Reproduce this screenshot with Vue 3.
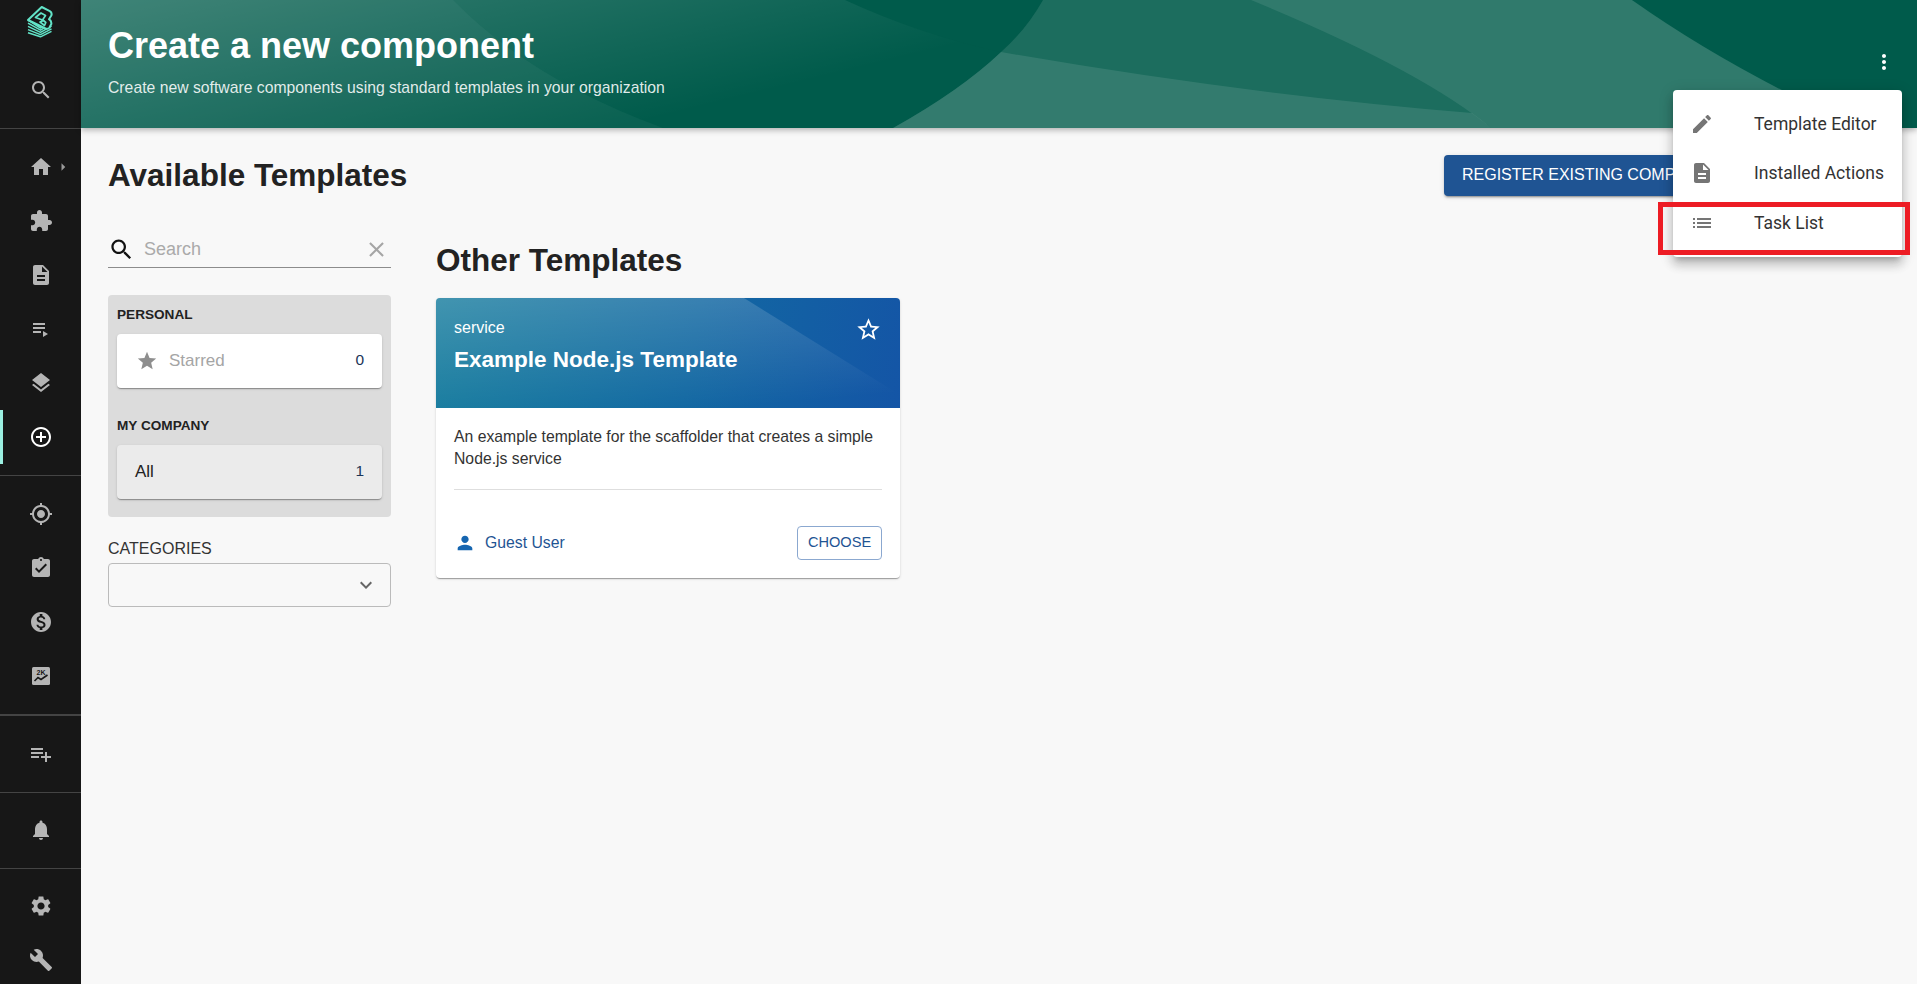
<template>
  <div class="page">
    <nav class="sidebar">
      <div class="brand">
        <svg class="logo" viewBox="0 0 26 32" fill="none" stroke="#62e3c7" stroke-width="1.500" stroke-linejoin="round">
          <path v-for="k in 5" :key="k" :d="stackLine(k - 1)" />
          <path fill="#171717" stroke-width="2" d="M1 14 14.700 1 22.800 5.200Q25.400 6.800 24.300 9.500L22 13.200Q24.800 15 24.300 18L22.500 21.500Q21 23.500 18.500 22.500Z" />
          <path stroke-width="1.700" d="M8.500 11.500 14 7 18.500 9.500 15.500 14ZM13 16 16.500 14.500 18.800 16.500 17.500 19.500Z" />
        </svg>
      </div>
      <div class="nav-item search-item">
        <svg class="nav-icon" viewBox="0 0 24 24"><path :d="icons.search" /></svg>
      </div>
      <template v-for="(group, i) in navGroups" :key="i">
        <div class="nav-divider" :class="{ thick: group.thick }"></div>
        <div class="nav-group">
          <div v-for="item in group.items" :key="item.icon" class="nav-item" :class="{ active: item.active }">
            <svg class="nav-icon" viewBox="0 0 24 24">
              <path :d="icons[item.icon]" />
              <template v-if="item.icon === 'cost'">
                <rect x="3" y="3" width="18" height="18" rx="1.500" />
                <text x="12" y="10.500" class="two-k">2K</text>
                <path d="M5.500 17 9 13.500 12 15.500 18.500 11" fill="none" stroke="#171717" stroke-width="1.600" />
              </template>
            </svg>
            <svg v-if="item.arrow" class="nav-arrow" viewBox="0 0 24 24"><path :d="icons.arrowRight" /></svg>
          </div>
        </div>
      </template>
    </nav>

    <main class="main">
      <header class="hero">
        <svg class="waves" viewBox="0 0 1836 128" preserveAspectRatio="none">
          <defs>
            <linearGradient id="fade" gradientUnits="userSpaceOnUse" x1="0" y1="0" x2="60" y2="245">
              <stop offset="0" stop-color="#fff" stop-opacity="0.22" />
              <stop offset="1" stop-color="#fff" stop-opacity="0" />
            </linearGradient>
          </defs>
          <rect width="1836" height="128" fill="#005b4b" />
          <path d="M0 0H962Q920 70 812 128H0Z" fill="url(#fade)" />
          <path d="M0 0H372Q450 80 582 128H0Z" fill="#fff" fill-opacity="0.04" />
          <path d="M764 0Q840 35 920 52Q945 30 962 0Z" fill="#005b4b" />
          <path d="M962 0Q945 30 920 52Q880 90 812 128H1836V0Z" fill="#fff" fill-opacity="0.11" />
          <path d="M920 52Q1160 94 1391 113Q1401 120 1410 128H812Q880 90 920 52Z" fill="#fff" fill-opacity="0.1" />
          <path d="M1170 0Q1340 70 1410 128H1836L1551 0Z" fill="#fff" fill-opacity="0.09" />
          <path d="M1551 0Q1650 70 1780 128H1836V0Z" fill="#005b4b" />
        </svg>
        <div class="hero-text">
          <h1>Create a new component</h1>
          <p>Create new software components using standard templates in your organization</p>
        </div>
        <svg class="more" viewBox="0 0 24 24"><path :d="icons.more" /></svg>
      </header>

      <section class="content">
        <div class="title-row">
          <h2>Available Templates</h2>
          <button class="register">REGISTER EXISTING COMPONENT</button>
        </div>

        <div class="columns">
          <aside class="filters">
            <div class="search">
              <svg class="search-icon" viewBox="0 0 24 24"><path :d="icons.search" /></svg>
              <span class="placeholder">Search</span>
              <svg class="clear-icon" viewBox="0 0 24 24"><path :d="icons.close" /></svg>
            </div>

            <div class="panel">
              <div class="panel-label">PERSONAL</div>
              <div class="panel-card">
                <svg class="star" viewBox="0 0 24 24"><path :d="icons.star" /></svg>
                <span class="muted">Starred</span>
                <span class="count">0</span>
              </div>
              <div class="panel-label second">MY COMPANY</div>
              <div class="panel-card selected">
                <span>All</span>
                <span class="count">1</span>
              </div>
            </div>

            <div class="cat-label">CATEGORIES</div>
            <div class="select">
              <svg viewBox="0 0 24 24"><path :d="icons.expand" /></svg>
            </div>
          </aside>

          <div class="templates">
            <h3>Other Templates</h3>
            <article class="card">
              <div class="card-head">
                <div class="card-type">service</div>
                <div class="card-title">Example Node.js Template</div>
                <svg class="card-star" viewBox="0 0 24 24"><path :d="icons.starBorder" /></svg>
              </div>
              <div class="card-body">
                <p>An example template for the scaffolder that creates a simple Node.js service</p>
                <div class="card-rule"></div>
                <div class="card-foot">
                  <svg class="person" viewBox="0 0 24 24"><path :d="icons.person" /></svg>
                  <span class="owner">Guest User</span>
                  <button class="choose">CHOOSE</button>
                </div>
              </div>
            </article>
          </div>
        </div>
      </section>
    </main>

    <div class="menu">
      <div v-for="entry in menuItems" :key="entry.label" class="menu-item">
        <svg viewBox="0 0 24 24"><path :d="icons[entry.icon]" /></svg>
        <span>{{ entry.label }}</span>
      </div>
    </div>
    <div class="highlight"></div>
  </div>
</template>

<script setup>
const icons = {
  search: "M15.5 14h-.79l-.28-.27C15.41 12.59 16 11.11 16 9.5 16 5.91 13.09 3 9.5 3S3 5.91 3 9.5 5.91 16 9.5 16c1.61 0 3.09-.59 4.23-1.57l.27.28v.79l5 4.99L20.49 19l-4.99-5zm-6 0C7.01 14 5 11.99 5 9.5S7.01 5 9.5 5 14 7.01 14 9.5 11.99 14 9.5 14z",
  home: "M10 20v-6h4v6h5v-8h3L12 3 2 12h3v8z",
  extension: "M20.5 11H19V7c0-1.1-.9-2-2-2h-4V3.5C13 2.12 11.88 1 10.5 1S8 2.12 8 3.5V5H4c-1.1 0-1.99.9-1.99 2v3.8H3.5c1.49 0 2.7 1.21 2.7 2.7s-1.21 2.7-2.7 2.7H2V20c0 1.1.9 2 2 2h3.8v-1.5c0-1.49 1.21-2.7 2.7-2.7 1.49 0 2.7 1.21 2.7 2.7V22H17c1.1 0 2-.9 2-2v-4h1.5c1.38 0 2.5-1.12 2.5-2.5S21.88 11 20.5 11z",
  description: "M14 2H6c-1.1 0-1.99.9-1.99 2L4 20c0 1.1.89 2 1.99 2H18c1.1 0 2-.9 2-2V8l-6-6zm2 16H8v-2h8v2zm0-4H8v-2h8v2zm-3-5V3.5L18.5 9H13z",
  playlistPlay: "M4 10h12v2H4zm0-4h12v2H4zm0 8h8v2H4zm10 0v6l5-3z",
  layers: "M11.99 18.54l-7.37-5.73L3 14.07l9 7 9-7-1.63-1.27-7.38 5.74zM12 16l7.36-5.73L21 9l-9-7-9 7 1.63 1.27L12 16z",
  addCircle: "M13 7h-2v4H7v2h4v4h2v-4h4v-2h-4V7zm-1-5C6.48 2 2 6.48 2 12s4.48 10 10 10 10-4.48 10-10S17.52 2 12 2zm0 18c-4.41 0-8-3.59-8-8s3.59-8 8-8 8 3.59 8 8-3.59 8-8 8z",
  target: "M12 8c-2.21 0-4 1.79-4 4s1.79 4 4 4 4-1.79 4-4-1.79-4-4-4zm8.94 3c-.46-4.17-3.77-7.48-7.94-7.94V1h-2v2.06C6.83 3.52 3.52 6.83 3.06 11H1v2h2.06c.46 4.17 3.77 7.48 7.94 7.94V23h2v-2.06c4.17-.46 7.48-3.77 7.94-7.94H23v-2h-2.06zM12 19c-3.87 0-7-3.13-7-7s3.13-7 7-7 7 3.13 7 7-3.13 7-7 7z",
  assignment: "M19 3h-4.18C14.4 1.84 13.3 1 12 1c-1.3 0-2.4.84-2.82 2H5c-1.1 0-2 .9-2 2v14c0 1.1.9 2 2 2h14c1.1 0 2-.9 2-2V5c0-1.1-.9-2-2-2zm-7 0c.55 0 1 .45 1 1s-.45 1-1 1-1-.45-1-1 .45-1 1-1zm-2 14l-4-4 1.41-1.41L10 14.17l6.59-6.59L18 9l-8 8z",
  money: "M12 2C6.48 2 2 6.48 2 12s4.48 10 10 10 10-4.48 10-10S17.52 2 12 2zm1.41 16.09V20h-2.67v-1.93c-1.71-.36-3.16-1.46-3.27-3.4h1.96c.1 1.05.82 1.87 2.65 1.87 1.96 0 2.4-.98 2.4-1.59 0-.83-.44-1.61-2.67-2.14-2.48-.6-4.18-1.62-4.18-3.67 0-1.72 1.39-2.84 3.11-3.21V4h2.67v1.95c1.86.45 2.79 1.86 2.85 3.39H14.3c-.05-1.11-.64-1.87-2.22-1.87-1.5 0-2.4.68-2.4 1.64 0 .84.65 1.39 2.67 1.91s4.18 1.39 4.18 3.91c-.01 1.83-1.38 2.83-3.12 3.16z",
  cost: "",
  playlistAdd: "M14 10H2v2h12v-2zm0-4H2v2h12V6zm4 8v-4h-2v4h-4v2h4v4h2v-4h4v-2h-4zM2 16h8v-2H2v2z",
  bell: "M12 22c1.1 0 2-.9 2-2h-4c0 1.1.89 2 2 2zm6-6v-5c0-3.07-1.64-5.64-4.5-6.32V4c0-.83-.67-1.5-1.5-1.5s-1.5.67-1.5 1.5v.68C7.63 5.36 6 7.92 6 11v5l-2 2v1h16v-1l-2-2z",
  settings: "M19.14 12.94c.04-.3.06-.61.06-.94 0-.32-.02-.64-.07-.94l2.03-1.58c.18-.14.23-.41.12-.61l-1.92-3.32c-.12-.22-.37-.29-.59-.22l-2.39.96c-.5-.38-1.03-.7-1.62-.94l-.36-2.54c-.04-.24-.24-.41-.48-.41h-3.84c-.24 0-.43.17-.47.41l-.36 2.54c-.59.24-1.13.57-1.62.94l-2.39-.96c-.22-.08-.47 0-.59.22L2.74 8.87c-.12.21-.08.47.12.61l2.03 1.58c-.05.3-.09.63-.09.94s.02.64.07.94l-2.03 1.58c-.18.14-.23.41-.12.61l1.92 3.32c.12.22.37.29.59.22l2.39-.96c.5.38 1.03.7 1.62.94l.36 2.54c.05.24.24.41.48.41h3.84c.24 0 .44-.17.47-.41l.36-2.54c.59-.24 1.13-.56 1.62-.94l2.39.96c.22.08.47 0 .59-.22l1.92-3.32c.12-.22.07-.47-.12-.61l-2.01-1.58zM12 15.6c-1.98 0-3.6-1.62-3.6-3.6s1.62-3.6 3.6-3.6 3.6 1.62 3.6 3.6-1.62 3.6-3.6 3.6z",
  build: "M22.7 19l-9.1-9.1c.9-2.3.4-5-1.5-6.9-2-2-5-2.4-7.4-1.3L9 6 6 9 1.6 4.7C.4 7.1.9 10.1 2.9 12.1c1.9 1.9 4.6 2.4 6.9 1.5l9.1 9.1c.4.4 1 .4 1.4 0l2.3-2.3c.5-.4.5-1.1.1-1.4z",
  edit: "M3 17.25V21h3.75L17.81 9.94l-3.75-3.75L3 17.25zM20.71 7.04c.39-.39.39-1.02 0-1.41l-2.34-2.34c-.39-.39-1.02-.39-1.41 0l-1.83 1.83 3.75 3.75 1.83-1.83z",
  list: "M3 13h2v-2H3v2zm0 4h2v-2H3v2zm0-8h2V7H3v2zm4 4h14v-2H7v2zm0 4h14v-2H7v2zM7 7v2h14V7H7z",
  close: "M19 6.41L17.59 5 12 10.59 6.41 5 5 6.41 10.59 12 5 17.59 6.41 19 12 13.41 17.59 19 19 17.59 13.41 12z",
  star: "M12 17.27L18.18 21l-1.64-7.03L22 9.24l-7.19-.61L12 2 9.19 8.63 2 9.24l5.46 4.73L5.82 21z",
  starBorder: "M22 9.24l-7.19-.62L12 2 9.19 8.63 2 9.24l5.46 4.73L5.82 21 12 17.27 18.18 21l-1.63-7.03L22 9.24zM12 15.4l-3.76 2.27 1-4.28-3.32-2.88 4.38-.38L12 6.1l1.71 4.04 4.38.38-3.32 2.88 1 4.28L12 15.4z",
  person: "M12 12c2.21 0 4-1.79 4-4s-1.79-4-4-4-4 1.79-4 4 1.79 4 4 4zm0 2c-2.67 0-8 1.34-8 4v2h16v-2c0-2.66-5.33-4-8-4z",
  more: "M12 8c1.1 0 2-.9 2-2s-.9-2-2-2-2 .9-2 2 .9 2 2 2zm0 2c-1.1 0-2 .9-2 2s.9 2 2 2 2-.9 2-2-.9-2-2-2zm0 6c-1.1 0-2 .9-2 2s.9 2 2 2 2-.9 2-2-.9-2-2-2z",
  expand: "M16.59 8.59L12 13.17 7.41 8.59 6 10l6 6 6-6z",
  arrowRight: "M10 17l5-5-5-5v10z",
};

const navGroups = [
  {
    items: [
      { icon: "home", arrow: true },
      { icon: "extension" },
      { icon: "description" },
      { icon: "playlistPlay" },
      { icon: "layers" },
      { icon: "addCircle", active: true },
    ],
  },
  {
    items: [
      { icon: "target" },
      { icon: "assignment" },
      { icon: "money" },
      { icon: "cost" },
    ],
  },
  { thick: true, items: [{ icon: "playlistAdd" }] },
  { items: [{ icon: "bell" }] },
  { items: [{ icon: "settings" }, { icon: "build" }] },
];

const menuItems = [
  { icon: "edit", label: "Template Editor" },
  { icon: "description", label: "Installed Actions" },
  { icon: "list", label: "Task List" },
];

// one layer of the logo's stack, k counts down from the top
const stackLine = (k) =>
  `M1 ${14 + 3.2 * k}L13.5 ${22 + 2.2 * k}L24.5 ${15 + 2.6 * k}`;
</script>

<style>
html,
body {
  margin: 0;
  height: 100%;
  overflow: hidden;
  background: #f8f8f8;
}
</style>

<style scoped>
.page {
  position: relative;
  display: flex;
  height: 984px;
  overflow: hidden;
  font-family: "Liberation Sans", Arial, sans-serif;
  color: #222;
  background: #f8f8f8;
}

.sidebar {
  flex: 0 0 81px;
  width: 81px;
  background: #171717;
  display: flex;
  flex-direction: column;
  overflow: hidden;
}

.brand {
  flex: none;
  height: 63px;
  box-sizing: border-box;
  padding: 6px 0 0 27px;
}

.logo {
  display: block;
  width: 26px;
  height: 32px;
}

.search-item {
  flex: none;
  height: 54px;
  margin-bottom: 11px;
}

.nav-divider {
  flex: none;
  height: 1px;
  background: #444;
}

.nav-divider.thick {
  height: 2px;
}

.nav-group {
  flex: none;
  padding: 10.500px 0 11px;
}

.nav-group:last-child {
  padding-top: 10px;
}

.nav-item {
  position: relative;
  height: 54.100px;
  display: flex;
  align-items: center;
  justify-content: center;
}

.nav-icon {
  width: 24px;
  height: 24px;
  fill: #b5b5b5;
}

.nav-arrow {
  position: absolute;
  left: 54px;
  top: 18px;
  width: 18px;
  height: 18px;
  fill: #9a9a9a;
}

.nav-item.active .nav-icon {
  fill: #fff;
}

.nav-item.active::before {
  content: "";
  position: absolute;
  left: 0;
  top: 0;
  bottom: 0;
  width: 3px;
  background: #9bf0e1;
}

.two-k {
  font: bold 7px "Liberation Sans", sans-serif;
  text-anchor: middle;
  fill: #171717;
}

.main {
  flex: 1;
  min-width: 0;
}

.hero {
  position: relative;
  height: 128px;
  box-sizing: border-box;
  padding: 25px 27px 0;
  box-shadow: 0 2px 6px rgba(0, 0, 0, 0.3);
  color: #fff;
  overflow: hidden;
}

.waves {
  position: absolute;
  inset: 0;
  width: 100%;
  height: 100%;
}

.hero-text {
  position: relative;
}

.hero h1 {
  margin: 0;
  font-size: 36px;
  line-height: 42px;
  font-weight: 700;
}

.hero p {
  margin: 12px 0 0;
  font-size: 15.750px;
  line-height: 18px;
  color: rgba(255, 255, 255, 0.88);
}

.more {
  position: absolute;
  right: 21px;
  top: 50px;
  width: 24px;
  height: 24px;
  fill: #fff;
}

.content {
  padding: 27px 27px 0;
}

.title-row {
  display: flex;
  align-items: center;
  justify-content: space-between;
  height: 41px;
}

.title-row h2 {
  margin: 0;
  font-size: 31.500px;
  line-height: 41px;
  font-weight: 700;
  color: #222;
}

.register {
  height: 41px;
  width: 300px;
  margin-right: 146px;
  padding: 0 18px 1px;
  border: 0;
  border-radius: 4px;
  background: #1f5493;
  color: #fff;
  font: 16px "Liberation Sans", Arial, sans-serif;
  text-align: left;
  white-space: nowrap;
  box-shadow: 0 3px 1px -2px rgba(0, 0, 0, 0.2), 0 2px 2px rgba(0, 0, 0, 0.14), 0 1px 5px rgba(0, 0, 0, 0.12);
}

.columns {
  display: grid;
  grid-template-columns: 283px 464px;
  column-gap: 45px;
  margin-top: 36px;
}

.search {
  display: flex;
  align-items: center;
  height: 35px;
  border-bottom: 1px solid #8c8c8c;
  color: #aaa;
}

.search-icon {
  width: 27px;
  height: 27px;
  fill: #111;
}

.placeholder {
  margin-left: 9px;
  font-size: 18px;
}

.clear-icon {
  width: 25px;
  height: 25px;
  margin-left: auto;
  margin-right: 2px;
  fill: #a5a5a5;
}

.panel {
  margin-top: 27px;
  padding: 10px 9px 18px;
  border-radius: 4px;
  background: #dcdcdc;
}

.panel-label {
  font-size: 13.600px;
  line-height: 20px;
  font-weight: 700;
  color: #222;
}

.panel-label.second {
  margin-top: 28px;
}

.panel-card {
  display: flex;
  align-items: center;
  height: 54px;
  margin-top: 9px;
  padding: 0 18px 0 18px;
  border-radius: 4px;
  background: #fff;
  font-size: 17px;
  box-shadow: 0 2px 1px -1px rgba(0, 0, 0, 0.2), 0 1px 1px rgba(0, 0, 0, 0.14), 0 1px 3px rgba(0, 0, 0, 0.12);
}

.panel-card.selected {
  background: #ebebeb;
}

.star {
  width: 22px;
  height: 22px;
  margin-left: 1px;
  margin-right: 11px;
  fill: #8e8e8e;
}

.muted {
  color: #a5a5a5;
}

.count {
  margin-left: auto;
  margin-bottom: 2px;
  font-size: 15.500px;
  color: #1c3557;
}

.cat-label {
  margin-top: 22px;
  font-size: 16px;
  line-height: 20px;
  color: #333;
}

.select {
  display: flex;
  align-items: center;
  justify-content: flex-end;
  height: 44px;
  box-sizing: border-box;
  margin-top: 4px;
  padding-right: 12px;
  border: 1px solid #bbb;
  border-radius: 4px;
}

.select svg {
  width: 24px;
  height: 24px;
  fill: #666;
}

.templates {
  padding-top: 10px;
}

.templates h3 {
  margin: 0;
  font-size: 31.500px;
  line-height: 36px;
  font-weight: 700;
  color: #222;
}

.card {
  margin-top: 20px;
  border-radius: 4px;
  overflow: hidden;
  background: #fff;
  box-shadow: 0 2px 1px -1px rgba(0, 0, 0, 0.2), 0 1px 1px rgba(0, 0, 0, 0.14), 0 1px 3px rgba(0, 0, 0, 0.12);
}

.card-head {
  position: relative;
  height: 110px;
  box-sizing: border-box;
  padding: 20px 18px 0;
  color: #fff;
  background: linear-gradient(100deg, #127a9c 0%, #1268a2 55%, #1455a6 100%);
}

/* the lighter sweep under the diagonal */
.card-head::before {
  content: "";
  position: absolute;
  inset: 0;
  background: linear-gradient(175deg, rgba(255, 255, 255, 0.2), rgba(255, 255, 255, 0) 90%);
  clip-path: polygon(0 0, 308px 0, 464px 97px, 464px 110px, 0 110px);
}

.card-type,
.card-title {
  position: relative;
}

.card-type {
  font-size: 16px;
  line-height: 20px;
}

.card-title {
  margin-top: 8px;
  font-size: 22.500px;
  line-height: 28px;
  font-weight: 700;
}

.card-star {
  position: absolute;
  right: 18px;
  top: 18px;
  width: 27px;
  height: 27px;
  fill: #fff;
}

.card-body {
  padding: 18px 18px 18px;
}

.card-body p {
  margin: 0;
  font-size: 15.750px;
  line-height: 22px;
  color: #333;
}

.card-rule {
  height: 1px;
  margin-top: 19px;
  background: #dedede;
}

.card-foot {
  display: flex;
  align-items: center;
  margin-top: 36px;
}

.person {
  width: 22px;
  height: 22px;
  fill: #1565b0;
}

.owner {
  margin-left: 9px;
  font-size: 15.750px;
  color: #1f5493;
}

.choose {
  width: 85px;
  height: 34px;
  margin-left: auto;
  padding: 0 0 2px;
  border: 1px solid #8ba8d0;
  border-radius: 4px;
  background: #fff;
  color: #1f5493;
  font: 14.600px "Liberation Sans", Arial, sans-serif;
}

.menu {
  position: absolute;
  left: 1673px;
  top: 90px;
  width: 229px;
  height: 167px;
  box-sizing: border-box;
  padding-top: 9px;
  border-radius: 4px;
  background: #fff;
  font-family: Roboto, Arial, sans-serif;
  font-size: 17.500px;
  color: #333;
  box-shadow: 0 5px 5px -3px rgba(0, 0, 0, 0.2), 0 8px 10px 1px rgba(0, 0, 0, 0.14), 0 3px 14px 2px rgba(0, 0, 0, 0.12);
}

.menu-item {
  display: flex;
  align-items: center;
  height: 49.500px;
  padding-left: 17px;
}

.menu-item svg {
  flex: none;
  width: 24px;
  height: 24px;
  margin-right: 40px;
  fill: #757575;
}

.menu-item span {
  white-space: nowrap;
}

.highlight {
  position: absolute;
  left: 1658px;
  top: 202px;
  width: 252px;
  height: 53px;
  box-sizing: border-box;
  border: 5px solid #ed1c24;
}
</style>
